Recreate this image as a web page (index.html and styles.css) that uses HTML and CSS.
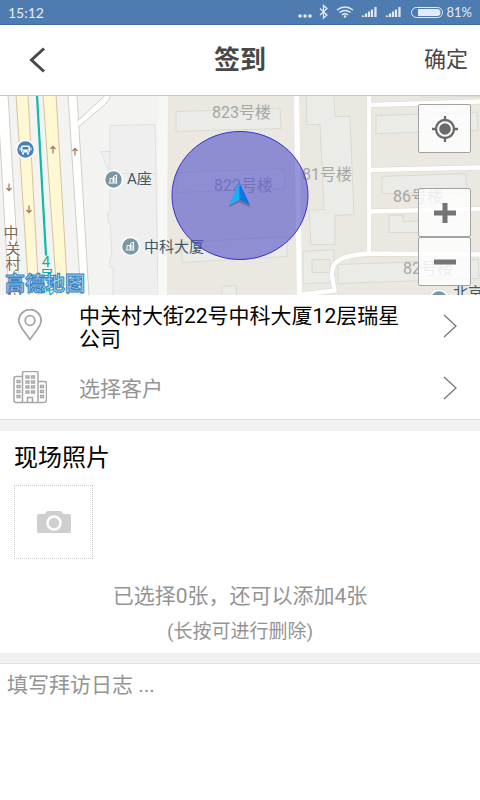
FILE: index.html
```html
<!DOCTYPE html>
<html lang="zh-CN">
<head>
<meta charset="UTF-8" />
<meta name="viewport" content="width=device-width, initial-scale=1.0"/>
<title>签到</title>
<link rel="stylesheet" href="styles.css">
</head>
<body>
  <div class="status-bar">
    <span class="clock">15:12</span>
    <div class="status-icons">
      <svg width="114" height="16" viewBox="0 0 114 16" fill="none" stroke="#e4ebf4">
        <g fill="#e4ebf4" stroke="none"><circle cx="3" cy="12" r="1.800"/><circle cx="8" cy="12" r="1.800"/><circle cx="13" cy="12" r="1.800"/></g>
        <path d="M23 4.500l7 6.500-3.500 3V1.500L30 4.500l-7 6.500" stroke-width="1.300"/>
        <path d="M40 6q8-6 16 0M42.500 8.500q5.500-4 11 0M45 11q3-2.500 6 0" stroke-width="1.500"/>
        <circle cx="48" cy="12.500" r="1.200" fill="#e4ebf4" stroke="none"/>
        <path d="M66 13v-1.500M69 13v-3.500M72 13V7.500M75 13V5.500M78.500 13V3" stroke-width="2.200"/>
        <path d="M90 13v-1.500M93 13v-3.500M96 13V7.500M99 13V5.500M102.500 13V3" stroke-width="2.200"/>
      </svg>
      <svg width="32" height="16" viewBox="0 0 32 16">
        <rect x="0.500" y="3.500" width="31" height="10" rx="5" fill="none" stroke="#e4ebf4"/>
        <path d="M7 5h19a3.500 3.500 0 0 1 0 7H7z" fill="#e4ebf4"/>
      </svg>
      <span class="battery">81%</span>
    </div>
  </div>

  <header class="header">
    <button class="back" type="button" aria-label="返回">
      <svg width="18" height="26" viewBox="0 0 18 26"><path d="M16 1.500L3.500 13L16 24.500" fill="none" stroke="#484848" stroke-width="3"/></svg>
    </button>
    <h1>签到</h1>
    <button class="confirm" type="button">确定</button>
  </header>

  <div class="map">
    <svg class="map-canvas" viewBox="0 0 480 200" preserveAspectRatio="xMidYMid slice">
      <rect width="480" height="200" fill="#f3f3f2"/>

      <!-- main street -->
      <g stroke="#c6c4bb" stroke-width="0.800">
        <path d="M-1 -1H8L20 201H9L-1 28z" fill="#fff"/>
        <path d="M68 -1H77L89 201H81z" fill="#fff"/>
        <path d="M77 26L106 -1H111Q110 4 105 9L79 31" fill="#fff"/>
      </g>
      <g fill="#fff8d2" stroke="#cdb592" stroke-width="0.800">
        <path d="M16 -1H28L39 201H29z"/>
        <path d="M43 -1H56L68 201H57z"/>
      </g>
      <path d="M37 0L46 160" stroke="#12b9a4" stroke-width="2.200"/>
      <g fill="none" stroke="#a9795a" stroke-width="1.300">
        <path d="M53 58v-7M50.500 53.500L53 51l2.500 2.500"/>
        <path d="M75 60v-7M72.500 55.500L75 53l2.500 2.500"/>
        <path d="M9 88v7M6.500 92.500L9 95l2.500-2.500"/>
        <path d="M29 110v7M26.500 114.500L29 117l2.500-2.500"/>
      </g>

      <!-- blocks -->
      <g fill="#efefef" stroke="#dcdcdc" stroke-width="0.800">
        <path d="M101 56h10l-1 23z"/>
        <path d="M110 30L155 29L156 78L158 201H113V172h-3v-10h2l-2-35h-2v-10h2z"/>
        <path d="M110 78H156" fill="none"/>
      </g>
      <path d="M158 0H168L167 200H158z" fill="#f7f7f6"/>
      <path d="M168 0H480V200H167z" fill="#ebe8e1"/>

      <!-- buildings -->
      <g fill="#ebece8" stroke="#d6d6d1" stroke-width="0.800">
        <path d="M176 16L280 13L281 33L176 36z"/>
        <path d="M177 77L284 73L285 93L177 97z"/>
        <path d="M181 147L287 141V161L182 167z"/>
        <path d="M222 191L236 190L237 201H222z"/>
        <path d="M306 -1H334L335 21H350L354 119L335 120V149L311 149L309 115L324 114L320 29H307z"/>
        <path d="M303 156L334 154V187L303 188z"/>
        <path d="M312 164H330V177H312z" fill="#ebe8e1"/>
        <path d="M422 -1V2L481 1V-1z"/>
        <path d="M376 20L477 17L478 35L376 38z"/>
        <path d="M382 81L466 78V97L382 98z"/>
        <path d="M389 120H403V126L470 124V137H389z"/>
        <path d="M338 169L478 164L479 183L338 188z"/>
      </g>

      <!-- lanes -->
      <g fill="none" stroke="#d8d6cf" stroke-width="5.500">
        <path d="M369 -1V158M369 9.500L481 6M369 74.500L481 72M369 116L481 113.500"/>
        <path d="M481 159L371 158Q350 159 340 164Q331 169 332 180L334.500 195L302 199"/>
      </g>
      <path d="M296.500 -1L299.500 201" stroke="#fff" stroke-width="5"/>
      <g fill="none" stroke="#fff" stroke-width="4.500">
        <path d="M369 -1V158M369 9.500L481 6M369 74.500L481 72M369 116L481 113.500"/>
        <path d="M481 159L371 158Q350 159 340 164Q331 169 332 180L334.500 195L302 199"/>
      </g>

      <g class="map-building">
        <text x="212" y="22">823号楼</text>
        <text x="214" y="95">822号楼</text>
        <text x="302" y="84">81号楼</text>
        <text x="393" y="106">86号楼</text>
        <text x="403" y="178">82号楼</text>
      </g>

      <g class="map-poi">
        <text x="127" y="88">A座</text>
        <text x="144" y="156">中科大厦</text>
        <text x="453" y="202">北京</text>
      </g>
      <g fill="#7898a6" stroke="#fff" stroke-width="1.500">
        <circle cx="113.500" cy="84" r="9"/>
        <circle cx="130.500" cy="151" r="9"/>
        <circle cx="439" cy="204" r="9"/>
        <circle cx="25.500" cy="54" r="9" fill="#4580bf"/>
      </g>
      <g fill="none" stroke="#fff">
        <path d="M108.500 87.500h9M110 87v-4h3v4M113.500 87v-6l3-1.500V87M115 82v5"/>
        <path d="M125.500 154.500h9M127 154v-4h3v4M130.500 154v-6l3-1.500v7.500M132 149v5"/>
      </g>
      <rect x="21" y="50" width="9" height="7" rx="1.500" fill="#fff"/>
      <path d="M22 57h2v2h-2zM27 57h2v2h-2zM19.500 52h1v3h-1zM30.500 52h1v3h-1z" fill="#fff"/>
      <path d="M22.500 51.500h6v2.500h-6z" fill="#4580bf"/>
      <path d="M22 55.500h1.500M27.500 55.500H29" stroke="#4580bf"/>

      <g class="map-street">
        <text x="11" y="142">中</text>
        <text x="13" y="158">关</text>
        <text x="13" y="173">村</text>
        <text x="14" y="188">大</text>
        <text x="15" y="203">街</text>
      </g>
      <g class="map-subway">
        <text x="46" y="171">4</text>
        <text x="47" y="185">号</text>
        <text x="47" y="200">线</text>
      </g>

      <!-- accuracy radius and position -->
      <ellipse cx="240" cy="100" rx="68" ry="64" fill="#5050c8" fill-opacity="0.600" stroke="#3a33cf"/>
      <path d="M239.500 90L228.500 112L239.500 107L250.500 112z" fill="#444" opacity="0.350"/>
      <path d="M239.500 87L229 109.500L239.500 104z" fill="#19b0fb"/>
      <path d="M239.500 87L250 109.500L239.500 104z" fill="#0876e2"/>

      <text class="map-logo" x="5" y="195">高德地图</text>
    </svg>

    <div class="map-controls">
      <button class="map-btn" type="button" aria-label="定位">
        <svg width="28" height="28" viewBox="0 0 28 28" fill="none" stroke="#6a6a6a" stroke-width="2.300">
          <circle cx="14" cy="14" r="9"/>
          <circle cx="14" cy="14" r="5.800" fill="#6a6a6a" stroke="none"/>
          <path d="M14 1v4M14 23v4M1 14h4M23 14h4"/>
        </svg>
      </button>
      <div class="zoom">
        <button class="map-btn" type="button" aria-label="放大">
          <svg width="24" height="24" viewBox="0 0 24 24"><path d="M12 2v20M1 12h22" stroke="#747474" stroke-width="5"/></svg>
        </button>
        <button class="map-btn" type="button" aria-label="缩小">
          <svg width="24" height="24" viewBox="0 0 24 24"><path d="M1 12h22" stroke="#747474" stroke-width="5"/></svg>
        </button>
      </div>
    </div>
  </div>

  <main>
    <section class="rows">
      <button class="row" type="button">
        <svg class="row-icon" width="34" height="34" viewBox="0 0 34 34" fill="none" stroke="#a6a6a6" stroke-width="1.800">
          <path d="M17 30.500C12 23 5.800 17 5.800 11.700a11.200 11.200 0 0 1 22.400 0C28.200 17 22 23 17 30.500z"/>
          <circle cx="17" cy="11.500" r="4.800"/>
        </svg>
        <span class="row-text">中关村大街22号中科大厦12层瑞星公司</span>
        <svg class="arrow" width="16" height="24" viewBox="0 0 16 24"><path d="M2 1l12 11L2 23" fill="none" stroke="#777" stroke-width="1.300"/></svg>
      </button>
      <button class="row" type="button">
        <svg class="row-icon" width="34" height="34" viewBox="0 0 34 34" fill="none" stroke="#a6a6a6" stroke-width="1.500">
          <path d="M9.500 31V2q0-1.500 1.500-1.500h12.500Q25 .5 25 2v29"/>
          <path d="M9.500 5.500H3Q1 5.500 1 7.500V29q0 2.500 2 2.500h28q2.500 0 2.500-2.500V12.500q0-2-2-2H25M14.500 31V26.500h5V31"/>
          <g stroke-width="1.300">
            <path d="M4 9.500h3v2H4zM4 14.500h3v2H4zM4 19.500h3v2H4zM4 24.500h3v2H4z"/>
            <path d="M13 5h3v2h-3zM13 10h3v2h-3zM13 15h3v2h-3zM13 20h3v2h-3zM18.500 5h3v2h-3zM18.500 10h3v2h-3zM18.500 15h3v2h-3zM18.500 20h3v2h-3z"/>
            <path d="M27.500 14.500h3v2h-3zM27.500 19.500h3v2h-3zM27.500 24.500h3v2h-3z"/>
          </g>
        </svg>
        <span class="row-text hint">选择客户</span>
        <svg class="arrow" width="16" height="24" viewBox="0 0 16 24"><path d="M2 1l12 11L2 23" fill="none" stroke="#777" stroke-width="1.300"/></svg>
      </button>
    </section>

    <section class="photos">
      <h2>现场照片</h2>
      <button class="add-photo" type="button" aria-label="添加照片">
        <svg width="34" height="24" viewBox="0 0 34 24">
          <path d="M2 4h6l1-2q.5-1 2-1h12q1.500 0 2 1l1 2h6q2 0 2 2v15q0 2-2 2H2q-2 0-2-2V6q0-2 2-2z" fill="#cfcfcf"/>
          <circle cx="17" cy="13" r="6.500" fill="none" stroke="#fff" stroke-width="2.500"/>
        </svg>
      </button>
      <p class="count">已选择0张，还可以添加4张</p>
      <p class="tip">(长按可进行删除)</p>
    </section>

    <textarea class="log" aria-label="拜访日志" placeholder="填写拜访日志 ..."></textarea>
  </main>
</body>
</html>
```

FILE: styles.css
```css
:root {
  --bar: #4e7cb0;
  --text: #484848;
  --muted: #949494;
  --gap: #f1f1f1;
  --line: #e0e0e0;
  --font: Roboto, "Noto Sans CJK SC", sans-serif;
}

* {
  box-sizing: border-box;
}

body {
  margin: 0;
  min-height: 100vh;
  display: flex;
  flex-direction: column;
  font-family: var(--font);
  background: #fff;
  color: #000;
}

button {
  padding: 0;
  border: none;
  background: none;
  font-family: inherit;
  color: inherit;
  cursor: pointer;
}

svg {
  display: block;
}

.status-bar {
  display: flex;
  justify-content: space-between;
  align-items: center;
  height: 25px;
  padding: 0 8px;
  background: var(--bar);
  border-bottom: 1px solid #3b6ba6;
  color: #e4ebf4;
  font-family: Lato, sans-serif;
  font-size: 14px;
}

.status-icons {
  display: flex;
  align-items: center;
}

.battery {
  margin-left: 4px;
  font-size: 13px;
}

/* header */
.header {
  display: grid;
  grid-template-columns: 1fr auto 1fr;
  align-items: center;
  height: 71px;
  padding: 0 12px 0 28px;
  border-bottom: 1px solid #c8c8c8;
  color: var(--text);
}

.header h1 {
  margin: 0;
  padding-right: 16px;
  font-size: 26px;
  line-height: 36px;
  font-weight: bold;
}

.back {
  justify-self: start;
}

.confirm {
  justify-self: end;
  font-size: 22px;
  line-height: 28px;
}

/* map */
.map {
  position: relative;
  height: 199px;
  overflow: hidden;
}

.map-canvas {
  width: 100%;
  height: 100%;
}

.map-canvas text {
  font-size: 15px;
}

.map-canvas .map-building text {
  font-size: 16px;
}

.map-building {
  fill: #a6a6a4;
}

.map-poi {
  fill: #3f5968;
}

.map-street {
  fill: #7b6b58;
  text-anchor: middle;
}

.map-subway {
  fill: #12b09c;
  text-anchor: middle;
}

.map-canvas .map-logo {
  font-size: 20px;
  font-weight: bold;
  fill: #a5cdeb;
  stroke: #3583c3;
  stroke-width: 1px;
}

.map-controls {
  position: absolute;
  top: 8px;
  right: 9px;
  display: flex;
  flex-direction: column;
  gap: 35px;
}

.zoom {
  display: flex;
  flex-direction: column;
}

.map-btn {
  display: flex;
  justify-content: center;
  align-items: center;
  width: 53px;
  height: 49px;
  border: 1px solid #a3a3a3;
  border-radius: 2px;
  background: rgba(255, 255, 255, 0.8);
}

/* form */
main {
  flex: 1;
  display: flex;
  flex-direction: column;
}

.rows {
  border-bottom: 1px solid var(--line);
}

.row {
  display: flex;
  align-items: center;
  width: 100%;
  min-height: 62px;
  padding: 0 22px 0 13px;
  text-align: left;
}

.row-icon {
  flex: none;
  margin-right: 32px;
}

.row-text {
  flex: 1;
  margin-right: 28px;
  padding-top: 3px;
  font-size: 21px;
  line-height: 23px;
}

.arrow {
  flex: none;
}

.hint {
  color: var(--muted);
}

.photos {
  padding: 13px 14px 8px;
  border-top: 11px solid var(--gap);
  border-bottom: 10px solid var(--gap);
}

.photos h2 {
  margin: 0 0 13px;
  font-size: 24px;
  font-weight: normal;
  line-height: 28px;
}

.add-photo {
  display: flex;
  justify-content: center;
  align-items: center;
  width: 79px;
  height: 74px;
  border: 1px dotted #ccc;
}

.photos p {
  margin: 0;
  color: var(--muted);
  text-align: center;
}

.photos .count {
  margin-top: 21px;
  font-size: 21px;
  line-height: 32px;
}

.photos .tip {
  margin-top: 7px;
  font-size: 19px;
  line-height: 26px;
}

.log {
  flex: 1;
  width: 100%;
  padding: 7px;
  border: none;
  border-top: 1px solid var(--line);
  outline: none;
  resize: none;
  font-family: inherit;
  font-size: 21px;
  line-height: 28px;
}

.log::placeholder {
  color: var(--muted);
}
```
